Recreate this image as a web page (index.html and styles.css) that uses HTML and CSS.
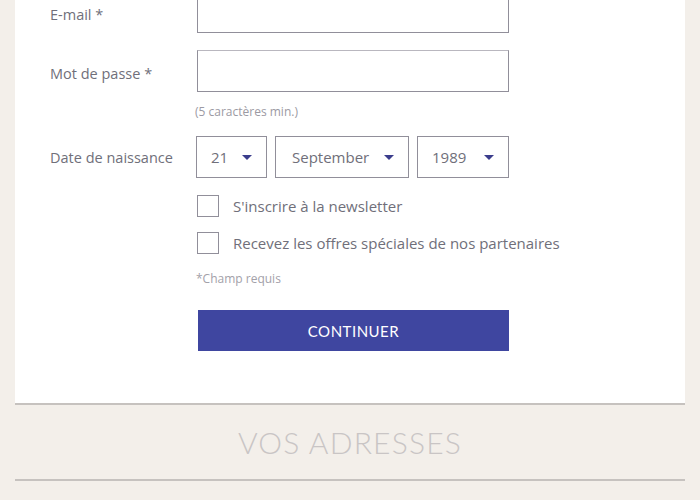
FILE: index.html
```html
<!DOCTYPE html>
<html lang="fr">
<head>
  <meta charset="UTF-8" />
  <title>Inscription</title>
  <link rel="stylesheet" href="styles.css">
</head>
<body>

  <section class="card">
    <div class="row">
      <label class="label label-low">E-mail *</label>
      <input class="field" type="text" />
    </div>

    <div class="row row-pass">
      <label class="label label-low">Mot de passe *</label>
      <input class="field" type="password" />
    </div>
    <p class="hint">(5 caractères min.)</p>

    <div class="row row-date">
      <label class="label">Date de naissance</label>
      <div class="selects">
        <div class="select day">21<span class="arrow"></span></div>
        <div class="select month">September<span class="arrow"></span></div>
        <div class="select year">1989<span class="arrow"></span></div>
      </div>
    </div>

    <div class="check check-first">
      <span class="box"></span>
      <span>S'inscrire à la newsletter</span>
    </div>
    <div class="check">
      <span class="box"></span>
      <span>Recevez les offres spéciales de nos partenaires</span>
    </div>
    <p class="required">*Champ requis</p>

    <button class="continue-btn">CONTINUER</button>
  </section>

  <section class="addresses">
    <h2>VOS ADRESSES</h2>
  </section>

</body>
</html>
```

FILE: styles.css
```css
body {
  margin: 0;
  padding: 0;
  background-color: #f3efea;
  font-family: "Open Sans", Arial, sans-serif;
  color: #706f7a;
}

.card {
  background: #fff;
  margin: -9px 15px 0;
  padding: 0 0 52px 35px;
  border-bottom: 2px solid #c6c2bf;
}

.row {
  display: flex;
  align-items: center;
}

.label {
  width: 147px;
  font-size: 14.5px;
}

.label-low {
  padding-top: 5px;
}

.field {
  width: 312px;
  height: 42px;
  box-sizing: border-box;
  border: 1px solid #918f9a;
  border-top-color: #b9b7bf;
  margin: 0;
}

.row-pass {
  margin-top: 17px;
}

.hint {
  margin: 12px 0 0 145px;
  font-size: 12px;
  color: #9c9aa3;
  line-height: 16px;
}

.row-date {
  margin-top: 16px;
}

.selects {
  display: flex;
  gap: 8px;
  margin-left: -1px;
}

.select {
  height: 42px;
  box-sizing: border-box;
  border: 1px solid #918f9a;
  display: flex;
  align-items: center;
  justify-content: space-between;
  padding: 0 14px 0 14px;
  font-size: 15px;
}

.day { width: 71px; }
.month { width: 134px; padding-left: 16px; }
.year { width: 92px; }

.arrow {
  width: 0;
  height: 0;
  border-left: 5px solid transparent;
  border-right: 5px solid transparent;
  border-top: 5px solid #3b3d8c;
}

.check {
  display: flex;
  align-items: center;
  margin-left: 147px;
  margin-top: 15px;
  font-size: 15px;
}

.check-first {
  margin-top: 17px;
}

.box {
  width: 22px;
  height: 22px;
  box-sizing: border-box;
  border: 1px solid #918f9a;
  margin-right: 14px;
}

.required {
  margin: 17px 0 0 146px;
  font-size: 12px;
  color: #a3a1a9;
  line-height: 16px;
}

.continue-btn {
  display: block;
  margin: 23px 0 0 148px;
  width: 311px;
  height: 41px;
  border: none;
  background-color: #3f46a0;
  color: #fff;
  font-family: "Lato", sans-serif;
  font-size: 15px;
  letter-spacing: 0.5px;
  cursor: pointer;
}

.addresses {
  margin: 0 15px;
  border-bottom: 2px solid #c6c2bf;
  text-align: center;
  padding: 19px 0 19px;
}

.addresses h2 {
  margin: 0;
  font-family: "Lato", sans-serif;
  font-weight: 300;
  font-size: 30px;
  letter-spacing: 1.2px;
  color: #c9c5c5;
  line-height: 36px;
}
```
